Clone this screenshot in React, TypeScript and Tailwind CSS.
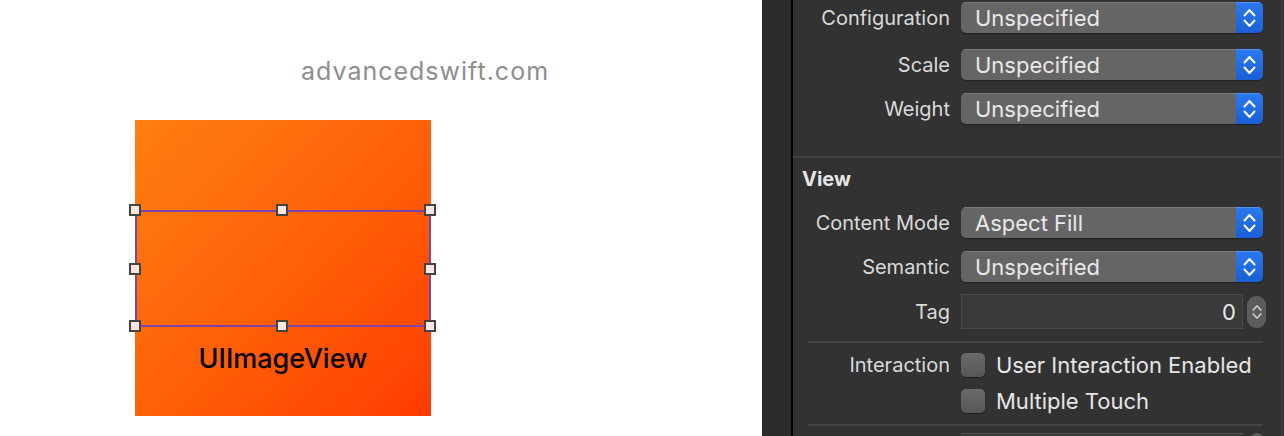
import React from "react";

const font = { fontFamily: "Inter, 'Noto Sans', sans-serif" };

function Chevrons({ w = 13, h = 20, sw = 2 }: { w?: number; h?: number; sw?: number }) {
  return (
    <svg width={w} height={h} viewBox="0 0 13 20" fill="none" stroke="currentColor" strokeWidth={sw} strokeLinecap="round" strokeLinejoin="round">
      <path d="M1.5 7.5 L6.5 2 L11.5 7.5" />
      <path d="M1.5 12.5 L6.5 18 L11.5 12.5" />
    </svg>
  );
}

function Dropdown({ value }: { value: string }) {
  return (
    <div className="flex h-[31px] w-[302px] overflow-hidden rounded-[5px] shadow-[0_1px_1px_rgba(0,0,0,0.35)]">
      <div className="flex flex-1 items-center border-t border-[#7a7a7a] bg-[#656565] pl-[14px] text-[22px] leading-none text-[#e9e9e9]">
        {value}
      </div>
      <div className="flex w-[27px] items-center justify-center border-t border-[#4d94ff] bg-gradient-to-b from-[#2a79ee] to-[#1a5fd6] text-white">
        <Chevrons />
      </div>
    </div>
  );
}

function Label({ children }: { children: React.ReactNode }) {
  return <div className="w-[158px] shrink-0 pr-[1px] text-right text-[20px] leading-none text-[#dadada]">{children}</div>;
}

function Row({ label, children, className = "" }: { label: string; children: React.ReactNode; className?: string }) {
  return (
    <div className={`flex items-center gap-[10px] ${className}`}>
      <Label>{label}</Label>
      {children}
    </div>
  );
}

function Checkbox() {
  return <div className="h-[24px] w-[24px] shrink-0 rounded-[5px] bg-gradient-to-b from-[#6a6a6a] to-[#575757] shadow-[0_1px_1px_rgba(0,0,0,0.4)]" />;
}

function Handle({ className }: { className: string }) {
  return (
    <div className={`absolute h-[12px] w-[12px] -translate-x-1/2 -translate-y-1/2 border-[2px] border-[#444] bg-[#fbe6e0] ${className}`} />
  );
}

export default function App() {
  return (
    <div className="flex h-[436px] w-[1284px] overflow-hidden" style={font}>
      {/* Canvas */}
      <div className="w-[762px] shrink-0 bg-white">
        <div className="ml-[301px] mt-[56px] text-[25px] leading-[30px] tracking-[1px] text-[#8e8e8e]">advancedswift.com</div>
        <div className="relative ml-[135px] mt-[34px] h-[296px] w-[296px] bg-gradient-to-br from-[#ff7e12] to-[#ff3a00]">
          <div className="absolute left-0 top-[90px] h-[117px] w-[296px] border-2 border-[#7e45a8]" />
          <Handle className="left-[0px] top-[90px]" />
          <Handle className="left-[147px] top-[90px]" />
          <Handle className="left-[295px] top-[90px]" />
          <Handle className="left-[0px] top-[149px]" />
          <Handle className="left-[295px] top-[149px]" />
          <Handle className="left-[0px] top-[206px]" />
          <Handle className="left-[147px] top-[206px]" />
          <Handle className="left-[295px] top-[206px]" />
          <div className="absolute left-0 right-0 top-[223px] text-center text-[27px] font-medium leading-[32px] text-black">UIImageView</div>
        </div>
      </div>

      {/* Dark strip + divider */}
      <div className="w-[29px] shrink-0 bg-[#2b2b2b]" />
      <div className="w-[2px] shrink-0 bg-black" />

      {/* Inspector */}
      <div className="flex-1 bg-[#323232]">
        <div className="pt-[2px]">
          <Row label="Configuration">
            <Dropdown value="Unspecified" />
          </Row>
          <Row label="Scale" className="mt-[16px]">
            <Dropdown value="Unspecified" />
          </Row>
          <Row label="Weight" className="mt-[13px]">
            <Dropdown value="Unspecified" />
          </Row>
        </div>
        <div className="mt-[32px] h-[2px] bg-[#424242]" />
        <div className="ml-[9px] mt-[10px] text-[20px] font-bold leading-[22px] text-[#e6e6e6]">View</div>
        <Row label="Content Mode" className="mt-[17px]">
          <Dropdown value="Aspect Fill" />
        </Row>
        <Row label="Semantic" className="mt-[13px]">
          <Dropdown value="Unspecified" />
        </Row>
        <Row label="Tag" className="mt-[12px]">
          <div className="flex items-center gap-[4px]">
            <div className="flex h-[35px] w-[282px] items-center justify-end border border-[#4a4a4a] bg-[#3a3a3a] pr-[6px] text-[22px] leading-none text-[#e9e9e9]">
              0
            </div>
            <div className="flex h-[32px] w-[19px] items-center justify-center rounded-[9px] bg-[#5c5c5c] text-[#e0e0e0]">
              <Chevrons w={10} h={20} sw={1.8} />
            </div>
          </div>
        </Row>
        <div className="ml-[15px] mr-[18px] mt-[12px] h-[2px] bg-[#444444]" />
        <Row label="Interaction" className="mt-[10px]">
          <div className="flex items-center gap-[11px]">
            <Checkbox />
            <span className="text-[22px] leading-none text-[#e6e6e6]">User Interaction Enabled</span>
          </div>
        </Row>
        <div className="ml-[168px] mt-[12px] flex items-center gap-[11px]">
          <Checkbox />
          <span className="text-[22px] leading-none text-[#e6e6e6]">Multiple Touch</span>
        </div>
        <div className="ml-[15px] mr-[18px] mt-[11px] h-[2px] bg-[#444444]" />
        <div className="ml-[168px] mt-[7px] flex gap-[8px]">
          <div className="h-[10px] w-[282px] border-t border-[#505050] bg-[#3a3a3a]" />
          <div className="h-[10px] w-[12px] rounded-t-[6px] bg-[#5c5c5c]" />
        </div>
      </div>
      <div className="w-[2px] shrink-0 bg-[#3c3c3c]" />
      <div className="w-[1px] shrink-0 bg-[#2b2b2b]" />
    </div>
  );
}
